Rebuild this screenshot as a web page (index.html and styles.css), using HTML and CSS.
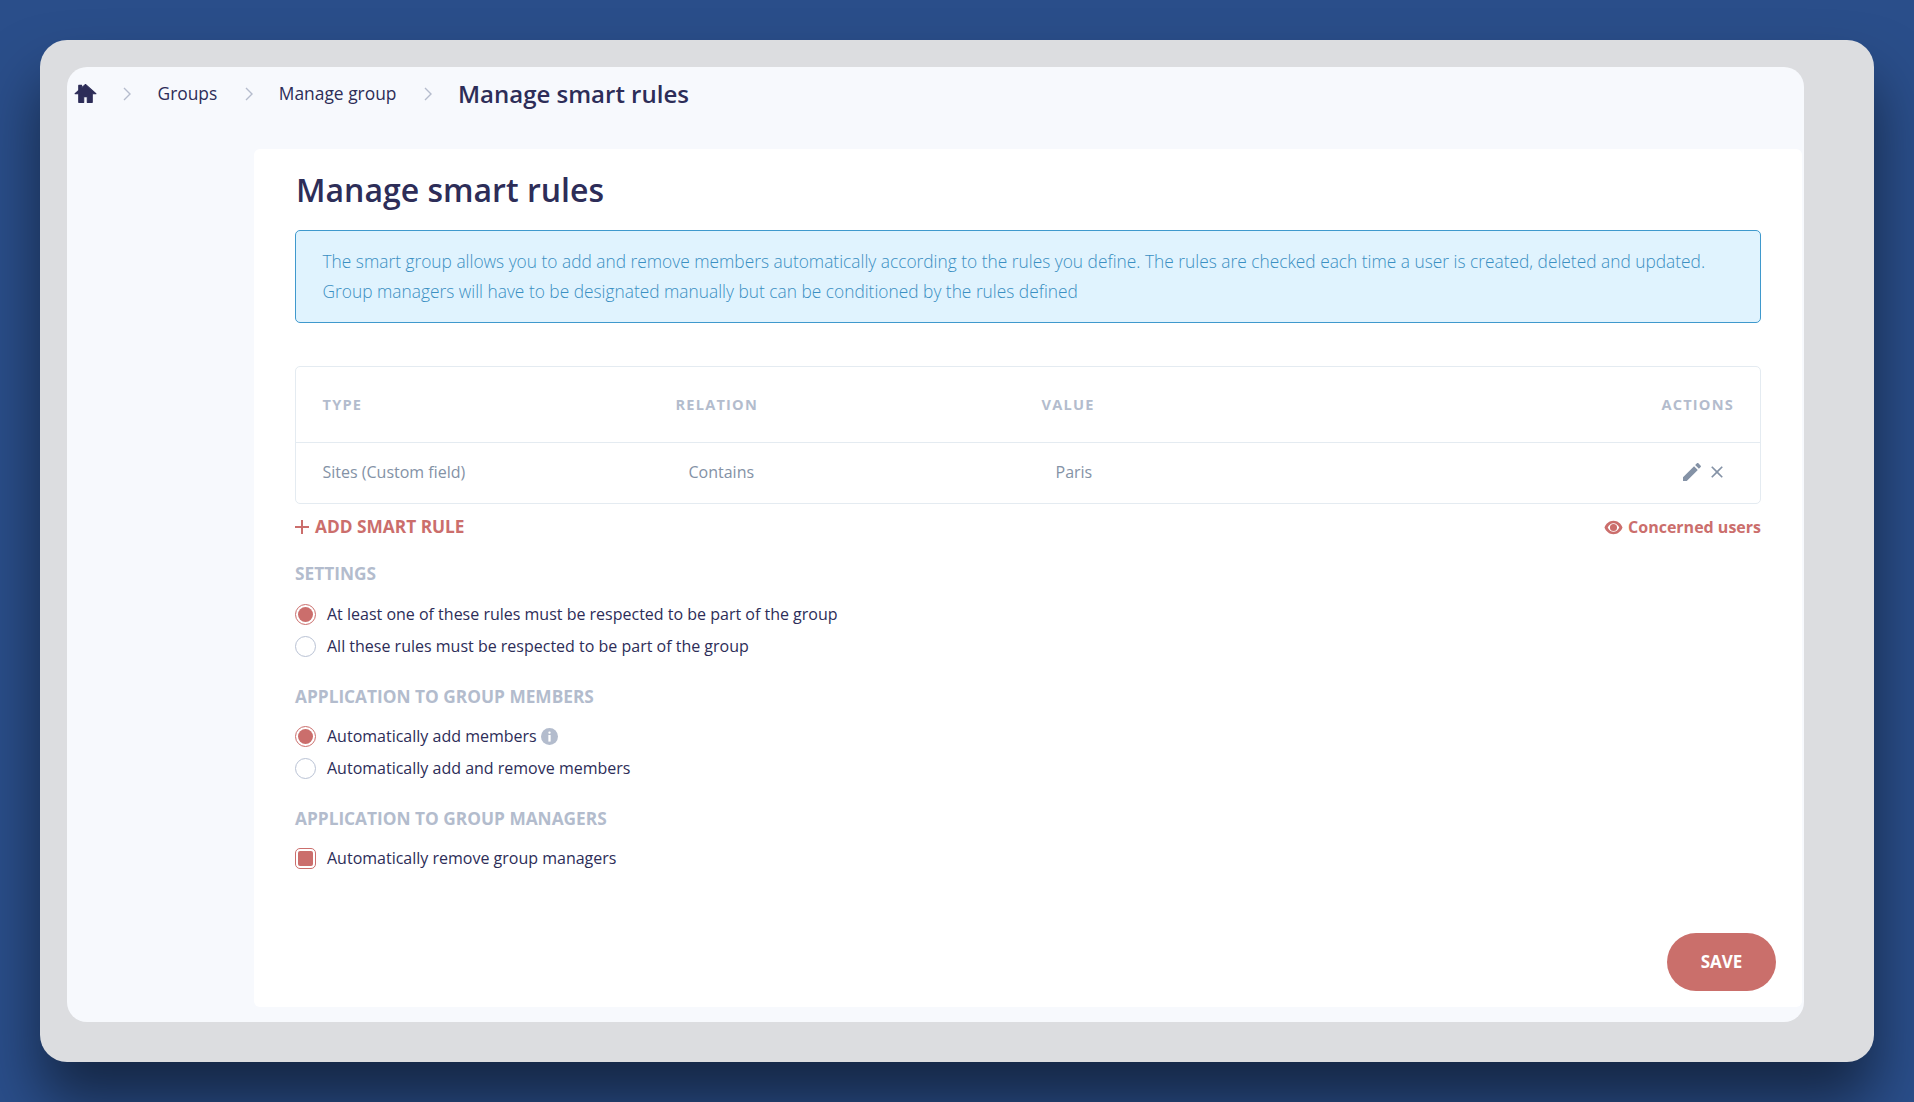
FILE: index.html
```html
<!DOCTYPE html>
<html lang="en">
<head>
  <meta charset="UTF-8" />
  <title>Manage smart rules</title>
  <link rel="stylesheet" href="styles.css">
</head>
<body>

  <div class="frame">
    <div class="app">
      <nav class="breadcrumb">
        <svg class="home" viewBox="0 0 24 24"><path d="M10.300 20.500v-5.500h3.400v5.500h4.800v-8.300H22L12 3.300 8.300 6.600V4.200H5.500v4.900L2 12.200h3.500v8.300z"/></svg>
        <svg class="sep" viewBox="0 0 8 14"><path d="M1 1l6 6-6 6"/></svg>
        <a class="crumb-groups">Groups</a>
        <svg class="sep" viewBox="0 0 8 14"><path d="M1 1l6 6-6 6"/></svg>
        <a class="crumb-manage">Manage group</a>
        <svg class="sep" viewBox="0 0 8 14"><path d="M1 1l6 6-6 6"/></svg>
        <span class="current">Manage smart rules</span>
      </nav>

      <main class="card">
        <h1>Manage smart rules</h1>

        <div class="alert">
          The smart group allows you to add and remove members automatically according to the rules you define. The rules are checked each time a user is created, deleted and updated.<br>
          Group managers will have to be designated manually but can be conditioned by the rules defined
        </div>

        <div class="rules">
          <div class="rules-row rules-head">
            <div class="col-type">TYPE</div>
            <div class="col-relation">RELATION</div>
            <div class="col-value">VALUE</div>
            <div class="col-actions">ACTIONS</div>
          </div>
          <div class="rules-row rules-body">
            <div class="col-type">Sites (Custom field)</div>
            <div class="col-relation cell-relation">Contains</div>
            <div class="col-value cell-value">Paris</div>
            <div class="col-actions cell-actions">
              <svg class="icon-edit" viewBox="0 0 24 24"><path d="M3 17.250V21h3.750L17.810 9.940l-3.750-3.750L3 17.250zM20.710 7.040c.39-.39.39-1.020 0-1.410l-2.340-2.340c-.39-.39-1.020-.39-1.410 0l-1.830 1.830 3.750 3.750 1.830-1.830z"/></svg>
              <svg class="icon-close" viewBox="0 0 24 24"><path d="M19 6.410 17.590 5 12 10.590 6.410 5 5 6.410 10.590 12 5 17.590 6.410 19 12 13.410 17.590 19 19 17.590 13.410 12z"/></svg>
            </div>
          </div>
        </div>

        <div class="links">
          <a class="add-rule">
            <svg class="icon-plus" viewBox="0 0 14 14"><path d="M6 0h2v6h6v2H8v6H6V8H0V6h6z"/></svg>
            ADD SMART RULE
          </a>
          <a class="concerned">
            <svg class="icon-eye" viewBox="0 0 24 24"><path fill-rule="evenodd" d="M12 3.500C6.800 3.500 2.400 7 .6 12c1.800 5 6.200 8.500 11.400 8.500S21.600 17 23.400 12C21.600 7 17.200 3.500 12 3.500zm0 14c-3 0-5.800-2-7.300-5.500C6.200 8.500 9 6.500 12 6.500s5.800 2 7.300 5.500c-1.500 3.500-4.300 5.500-7.300 5.500zM12 7.500a4.500 4.500 0 1 0 0 9 4.500 4.500 0 0 0 0-9z"/></svg>
            Concerned users
          </a>
        </div>

        <h2 class="first">SETTINGS</h2>
        <label class="option"><input type="radio" name="settings" checked> At least one of these rules must be respected to be part of the group</label>
        <label class="option"><input type="radio" name="settings"> All these rules must be respected to be part of the group</label>

        <h2>APPLICATION TO GROUP MEMBERS</h2>
        <label class="option"><input type="radio" name="members" checked> Automatically add members
          <svg class="icon-info" viewBox="0 0 18 18"><circle cx="9" cy="9" r="9"/><rect x="7.800" y="3.600" width="2.400" height="2.400" rx="1"/><rect x="7.800" y="7.400" width="2.400" height="7"/></svg>
        </label>
        <label class="option"><input type="radio" name="members"> Automatically add and remove members</label>

        <h2>APPLICATION TO GROUP MANAGERS</h2>
        <label class="option"><input type="checkbox" checked> Automatically remove group managers</label>

        <button class="save">SAVE</button>
      </main>
    </div>
  </div>

</body>
</html>
```

FILE: styles.css
```css
* {
  box-sizing: border-box;
}

html, body {
  height: 100%;
}

body {
  margin: 0;
  padding: 40px;
  overflow: hidden;
  background-color: #2a4e8a;
  font-family: 'Open Sans', sans-serif;
  color: #2d2d58;
}

.frame {
  height: 1022px;
  padding: 27px 70px 40px 27px;
  background-color: #dcdde0;
  border-radius: 27px;
  box-shadow: 0 40px 60px rgba(0, 0, 0, 0.5);
}

.app {
  height: 100%;
  display: flex;
  flex-direction: column;
  padding: 0 2px 15px 187px;
  background-color: #f7f9fd;
  border-radius: 20px;
}

.breadcrumb {
  height: 82px;
  margin-left: -180px;
  padding-bottom: 30px;
  display: flex;
  align-items: center;
  font-size: 17.400px;
}

.breadcrumb a {
  color: #2d2d58;
}

.home {
  width: 25px;
  height: 25px;
  margin: 1px -1.500px 0 -1.500px;
  fill: #2d2d58;
  stroke: #2d2d58;
  stroke-width: 1;
  stroke-linejoin: round;
}

.sep {
  width: 8px;
  height: 14px;
  margin: 2px 26.200px 0 27.300px;
  fill: none;
  stroke: #b5bccd;
  stroke-width: 1.400;
}

.current {
  font-size: 24px;
  font-weight: 600;
}

.card {
  flex: 1;
  display: flex;
  flex-direction: column;
  padding: 19px 41px 16px 41px;
  background-color: #fff;
  border-radius: 6px;
}

h1 {
  margin: 0 0 18px 1px;
  font-size: 32px;
  line-height: 44px;
  font-weight: 600;
}

.alert {
  height: 93px;
  padding: 15px 26px 15px 26.500px;
  font-size: 17.330px;
  line-height: 30px;
  font-weight: 300;
  color: #3a8fc2;
  background-color: #e0f3fe;
  border: 1px solid #3f99cd;
  border-radius: 5px;
}

.rules {
  margin-top: 43px;
  border: 1px solid #e4ebf1;
  border-radius: 5px;
}

.rules-row {
  display: grid;
  grid-template-columns: 353px 366px 1fr 200px;
  align-items: center;
  padding: 0 26px 0 26.500px;
}

.rules-head {
  height: 76px;
  padding-bottom: 2px;
  font-size: 14.600px;
  font-weight: 700;
  letter-spacing: 1.200px;
  color: #b3bccd;
  border-bottom: 1px solid #e4ebf1;
}

.rules-body {
  height: 60px;
  padding-bottom: 2px;
  font-size: 16px;
  color: #8492a6;
}

.cell-relation {
  padding-left: 13px;
}

.cell-value {
  padding-left: 14px;
}

.col-actions {
  text-align: right;
}

.cell-actions {
  display: flex;
  justify-content: flex-end;
  align-items: center;
  gap: 3px;
  padding-right: 7px;
  color: #8492a6;
}

.icon-edit {
  width: 24px;
  height: 24px;
  fill: #8492a6;
}

.icon-close {
  width: 20px;
  height: 20px;
  fill: #8492a6;
}

.links {
  display: flex;
  justify-content: space-between;
  align-items: center;
  height: 45px;
  color: #cb6e6c;
  font-weight: 700;
}

.add-rule {
  display: flex;
  align-items: center;
  gap: 6px;
  font-size: 17.300px;
}

.icon-plus {
  width: 14px;
  height: 14px;
  fill: #cb6e6c;
}

.concerned {
  display: flex;
  align-items: center;
  gap: 5px;
  font-size: 16px;
  padding-top: 1px;
}

.icon-eye {
  width: 19px;
  height: 19px;
  fill: #cb6e6c;
}

h2 {
  margin: 20px 0 9px;
  font-size: 17.300px;
  line-height: 29px;
  font-weight: 700;
  color: #b3bccd;
}

h2.first {
  margin: 10px 0 10px;
}

.option {
  display: flex;
  align-items: center;
  gap: 11px;
  height: 32px;
  font-size: 16px;
}

.option input {
  appearance: none;
  width: 21px;
  height: 21px;
  margin: 0;
  padding: 2px;
  border: 1px solid #b9c2d4;
  border-radius: 50%;
  background-color: #fff;
  background-clip: content-box;
}

.option input:checked {
  border-color: #cb6e6c;
  background-color: #cb6e6c;
}

.option input[type="checkbox"] {
  border-radius: 5px;
}

.icon-info {
  width: 17px;
  height: 17px;
  margin-left: -7px;
  fill: #b3bccd;
}

.icon-info rect {
  fill: #fff;
}

.save {
  align-self: flex-end;
  margin: auto -15px 0 0;
  padding-bottom: 3px;
  width: 109px;
  height: 58px;
  font-family: inherit;
  font-size: 17px;
  font-weight: 700;
  color: #fff;
  background-color: #ca6f6b;
  border: none;
  border-radius: 29px;
}
```
